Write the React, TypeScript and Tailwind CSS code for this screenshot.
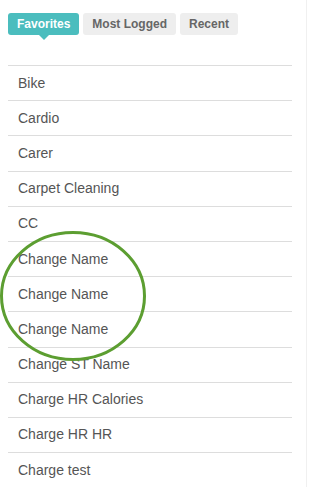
import React from "react";

const items = [
  "Bike",
  "Cardio",
  "Carer",
  "Carpet Cleaning",
  "CC",
  "Change Name",
  "Change Name",
  "Change Name",
  "Change ST Name",
  "Charge HR Calories",
  "Charge HR HR",
  "Charge test",
];

const App = () => {
  return (
    <div
      className="relative w-[312px] h-[487px] overflow-hidden bg-white"
      style={{ fontFamily: '"Liberation Sans", Arial, sans-serif' }}
    >
      <div className="w-[307px] h-full border-r border-[#f0f0f0] pl-2">
        {/* tabs */}
        <div className="flex gap-1 pt-[13px]">
          <div className="relative h-[22px] px-[9px] flex items-center rounded-[3px] bg-[#4bbdbe] text-white text-[12px] font-bold">
            Favorites
            <span className="absolute left-1/2 -translate-x-1/2 top-full w-0 h-0 border-l-[5px] border-r-[5px] border-t-[5px] border-l-transparent border-r-transparent border-t-[#4bbdbe]" />
          </div>
          <div className="h-[22px] px-[9px] flex items-center rounded-[3px] bg-[#eeeeee] text-[#666] text-[12px] font-bold">
            Most Logged
          </div>
          <div className="h-[22px] px-[9px] flex items-center rounded-[3px] bg-[#eeeeee] text-[#666] text-[12px] font-bold">
            Recent
          </div>
        </div>

        {/* list */}
        <ul className="mt-[30px] w-[284px] border-t border-[#dddddd]">
          {items.map((name, i) => (
            <li
              key={i}
              className="h-[35.2px] flex items-center pl-[10px] border-b border-[#dddddd] text-[14px] text-[#555]"
            >
              {name}
            </li>
          ))}
        </ul>
      </div>

      {/* highlight circle */}
      <svg
        className="absolute left-0 top-0 pointer-events-none"
        width="312"
        height="487"
        viewBox="0 0 312 487"
      >
        <ellipse
          cx="73"
          cy="296"
          rx="71.5"
          ry="63.5"
          fill="none"
          stroke="#5c9e31"
          strokeWidth="3"
        />
      </svg>
    </div>
  );
};

export default App;
